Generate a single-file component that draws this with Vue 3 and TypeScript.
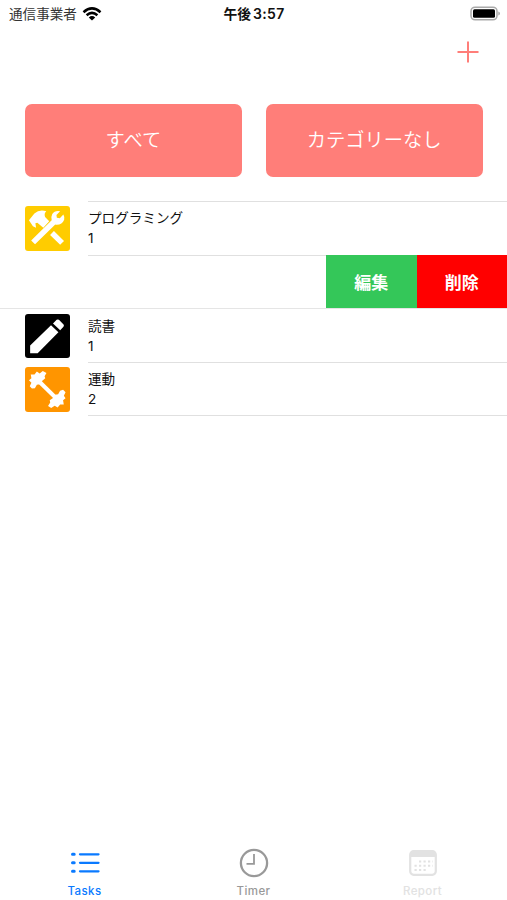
<script setup lang="ts">
import { ref } from "vue";

interface Task {
  name: string;
  count: number;
  icon: string;
  swiped?: boolean;
}

const categories = ["すべて", "カテゴリーなし"];

const tasks = ref<Task[]>([
  { name: "プログラミング", count: 1, icon: "tools" },
  { name: "", count: 0, icon: "", swiped: true },
  { name: "読書", count: 1, icon: "pencil" },
  { name: "運動", count: 2, icon: "barbell" },
]);
</script>

<template>
  <div class="screen">
    <header class="status">
      <div class="carrier">
        <span>通信事業者</span>
        <svg class="wifi" viewBox="0 0 20 14">
          <path d="M1.5 5.2Q10-2.4 18.5 5.2M4.6 8.3Q10 3.5 15.4 8.3" fill="none" stroke="#000" stroke-width="2.5" />
          <path d="M6.8 10.4Q10 7.7 13.2 10.4L10 13.5Z" />
        </svg>
      </div>
      <div class="time"><span>午後</span><span class="clock">3:57</span></div>
      <svg class="battery" viewBox="0 0 32 16">
        <rect x="2" y="1.2" width="26" height="12.6" rx="4" fill="#fff" stroke="#aaa" stroke-width="1.5" />
        <rect x="4" y="3.2" width="22" height="8.6" rx="1.5" />
        <path d="M29.3 5.5Q31 6 31 7.5Q31 9.1 29.3 9.6Z" fill="#aaa" />
      </svg>
    </header>

    <nav class="navbar">
      <button type="button" class="add" aria-label="追加">
        <svg viewBox="0 0 22 22"><path d="M11 .5V21.5M.5 11H21.5" stroke="#ff7e79" stroke-width="2" /></svg>
      </button>
    </nav>

    <div class="categories">
      <button v-for="c in categories" :key="c" type="button">{{ c }}</button>
    </div>

    <ul class="tasks">
      <li v-for="(task, i) in tasks" :key="i" :class="{ swiped: task.swiped }">
        <template v-if="task.swiped">
          <button type="button" class="edit">編集</button>
          <button type="button" class="delete">削除</button>
        </template>
        <template v-else>
          <div class="icon" :class="task.icon">
            <svg v-if="task.icon === 'tools'" viewBox="0 0 45 45">
              <path d="M31 14.5L8.2 36.8M27.3 27.3L37.5 37.3" fill="none" stroke="#fff" stroke-width="5.6" />
              <path d="M4 14.5L9.5 7.5Q14.5 3 21.5 5.2Q19 7.5 20.3 11L24.5 15.5L18.5 22L12.5 17L10.5 17.5L11.2 22L8 20.5Z" fill="#fff" />
              <path d="M35.5 5.2Q30 4.2 27.6 8Q26 11 27 14.5L31 19Q37.5 19.5 39.6 14Q40.2 11 38.8 8.7L35.2 12.4L32.2 11.8L31.8 9Z" fill="#fff" />
            </svg>
            <svg v-else-if="task.icon === 'pencil'" viewBox="0 0 45 45">
              <path d="M5.2 39.6V31.8L26.3 11.3L33.8 18.5L12.8 39.6ZM28.3 9.5L32 5.9Q33.1 5 34.3 5.9L39 10.7Q39.8 11.8 38.9 12.9L35.6 16.5Z" fill="#fff" />
            </svg>
            <svg v-else viewBox="0 0 45 45">
              <path d="M13 13.5L33 33" stroke="#fff" stroke-width="4.2" />
              <path d="M4 13.5L6.5 11.5L5.8 7.6L9.6 7.6L12 4.6L14.8 6.5L18 4L21.7 6L19.8 9.3L20.5 11.5L17.5 14L15 17.5L12 18L10 21.5L7 21.8L4.8 19.5L6.5 16Z" fill="#fff" />
              <path d="M41 31.5L38.5 33.5L39.2 37.8L35.5 38L33 41L30 39.2L26.5 41.4L23.3 39.5L25.5 36L25 33.5L28 31.5L30.5 28L33.5 27.5L35.5 24L38.5 23L41 25.5L39.3 29Z" fill="#fff" />
            </svg>
          </div>
          <div class="info">
            <p class="name">{{ task.name }}</p>
            <p class="count">{{ task.count }}</p>
          </div>
        </template>
      </li>
    </ul>

    <footer class="tabs">
      <a class="tab active">
        <svg viewBox="0 0 30 30">
          <path d="M10 6.3H28.5M10 14.8H28.5M10 23.3H28.5" stroke="currentColor" stroke-width="2.3" stroke-linecap="round" />
          <path d="M2.5 6.3H4.2M2.5 14.8H4.2M2.5 23.3H4.2" stroke="currentColor" stroke-width="3" stroke-linecap="round" />
        </svg>
        <span>Tasks</span>
      </a>
      <a class="tab">
        <svg viewBox="0 0 30 30" fill="none" stroke="currentColor">
          <circle cx="15" cy="15" r="13.1" stroke-width="2.3" />
          <path d="M15 6V15.8H7.5" stroke-width="1.8" />
        </svg>
        <span>Timer</span>
      </a>
      <a class="tab disabled">
        <svg viewBox="0 0 30 30">
          <rect x="2.2" y="3.2" width="25.6" height="23.6" rx="3.5" fill="none" stroke="currentColor" stroke-width="2.2" />
          <path d="M2 9V6Q2 3 5 3H25Q28 3 28 6V9Z" fill="currentColor" />
          <path d="M11 13.5H25M6.5 17.8H25M6.5 22H20" stroke="currentColor" stroke-width="2" stroke-dasharray="2.2 2.3" />
        </svg>
        <span>Report</span>
      </a>
    </footer>
  </div>
</template>

<style>
body {
  margin: 0;
  background: #fff;
}
</style>

<style scoped>
.screen {
  display: flex;
  flex-direction: column;
  height: 900px;
  font-family: Inter, "Noto Sans CJK JP", sans-serif;
  color: #111;
}
button {
  border: none;
  padding: 0;
  font-family: inherit;
  color: #fff;
}
.status {
  display: grid;
  grid-template-columns: 1fr auto 1fr;
  align-items: center;
  height: 27px;
  padding: 0 6px 0 9px;
}
.carrier {
  display: flex;
  align-items: center;
  gap: 5px;
  font-size: 13.6px;
  line-height: 20px;
  color: #333;
}
.wifi {
  width: 20px;
  height: 14px;
}
.time {
  display: flex;
  align-items: center;
  gap: 2px;
  padding-right: 2px;
  font-size: 13.8px;
  font-weight: 700;
  line-height: 20px;
}
.clock {
  font-size: 14px;
  font-weight: 600;
  letter-spacing: 0.3px;
}
.battery {
  width: 32px;
  height: 16px;
  justify-self: end;
}
.navbar {
  display: flex;
  justify-content: flex-end;
  height: 60.5px;
  padding: 14px 28px 0 0;
  box-sizing: border-box;
}
.add {
  width: 22px;
  height: 22px;
  background: none;
}
.add svg {
  display: block;
}
.categories {
  display: grid;
  grid-template-columns: 1fr 1fr;
  gap: 24px;
  padding: 16px 24.5px 0 25px;
}
.categories button {
  height: 73.5px;
  padding-bottom: 2px;
  border-radius: 7px;
  background: #ff7e79;
  font-size: 19.3px;
  font-weight: 350;
}
.tasks {
  list-style: none;
  margin: 24px 0 0;
  padding: 0;
}
.tasks li {
  display: flex;
  height: 53.75px;
  padding-left: 25px;
}
.icon {
  width: 44.5px;
  height: 44.5px;
  margin: 5px 18.5px 0 0;
  border-radius: 3px;
}
.icon svg {
  display: block;
}
.tools {
  background: #ffcc00;
}
.pencil {
  background: #000;
}
.barbell {
  background: #ff9500;
}
.info {
  flex: 1;
  border-top: 1px solid #e0e0e0;
}
li:last-child .info {
  border-bottom: 1px solid #e0e0e0;
}
.swiped + li .info {
  border-top-color: transparent;
}
.info p {
  margin: 0;
  font-size: 13.6px;
  line-height: 20px;
}
.info .name {
  padding-top: 6px;
}
.info .count {
  line-height: 20px;
}
.tasks .swiped {
  justify-content: flex-end;
  box-sizing: border-box;
  border-bottom: 1px solid #e5e5e5;
  background: linear-gradient(#e0e0e0, #e0e0e0) 88px 0 / 100% 1px no-repeat;
}
.swiped button {
  width: 90.5px;
  font-size: 17px;
  font-weight: 700;
}
.edit {
  background: #34c759;
}
.delete {
  background: #ff0000;
}
.tabs {
  display: grid;
  grid-template-columns: repeat(3, 1fr);
  margin-top: auto;
  height: 52px;
}
.tab {
  display: flex;
  flex-direction: column;
  align-items: center;
  gap: 6px;
  font-size: 11.5px;
  font-weight: 500;
  line-height: 14px;
  letter-spacing: 0.4px;
  color: #999;
}
.tab svg {
  width: 30px;
  height: 30px;
}
.active {
  color: #0a7aff;
}
.disabled {
  color: #e2e2e2;
}
</style>
